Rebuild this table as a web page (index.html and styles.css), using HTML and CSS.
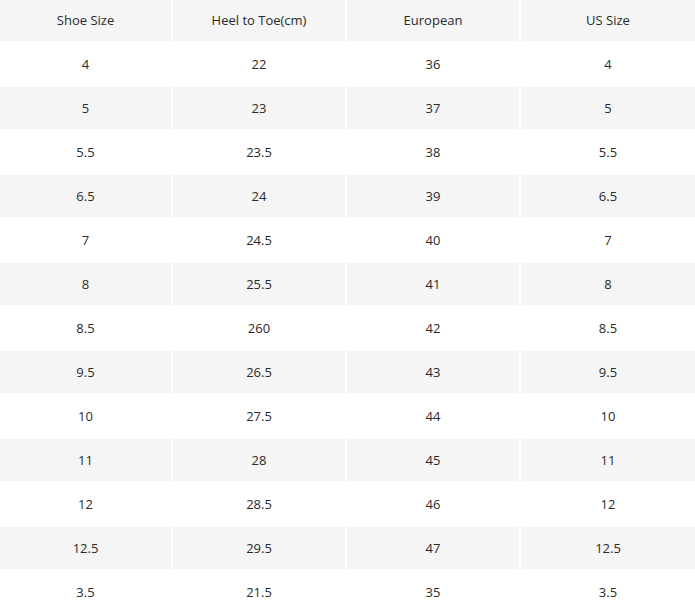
FILE: index.html
```html
<!DOCTYPE html>
<html>
<head>
<meta charset="utf-8">
<link rel="stylesheet" href="styles.css">
</head>
<body>
<div class="size-table">
  <div class="row head"><div>Shoe Size</div><div>Heel to Toe(cm)</div><div>European</div><div>US Size</div></div>
  <div class="row"><div>4</div><div>22</div><div>36</div><div>4</div></div>
  <div class="row alt"><div>5</div><div>23</div><div>37</div><div>5</div></div>
  <div class="row"><div>5.5</div><div>23.5</div><div>38</div><div>5.5</div></div>
  <div class="row alt"><div>6.5</div><div>24</div><div>39</div><div>6.5</div></div>
  <div class="row"><div>7</div><div>24.5</div><div>40</div><div>7</div></div>
  <div class="row alt"><div>8</div><div>25.5</div><div>41</div><div>8</div></div>
  <div class="row"><div>8.5</div><div>260</div><div>42</div><div>8.5</div></div>
  <div class="row alt"><div>9.5</div><div>26.5</div><div>43</div><div>9.5</div></div>
  <div class="row"><div>10</div><div>27.5</div><div>44</div><div>10</div></div>
  <div class="row alt"><div>11</div><div>28</div><div>45</div><div>11</div></div>
  <div class="row"><div>12</div><div>28.5</div><div>46</div><div>12</div></div>
  <div class="row alt"><div>12.5</div><div>29.5</div><div>47</div><div>12.5</div></div>
  <div class="row"><div>3.5</div><div>21.5</div><div>35</div><div>3.5</div></div>
</div>
</body>
</html>
```

FILE: styles.css
```css
html, body {
  margin: 0;
  padding: 0;
  background: #ffffff;
}
body {
  font-family: "Open Sans", "Noto Sans", sans-serif;
  font-size: 13px;
  color: #2a2a2a;
  overflow: hidden;
}
.size-table {
  display: flex;
  flex-direction: column;
  gap: 2px;
  margin-top: -1px;
  width: 695px;
}
.row {
  display: grid;
  grid-template-columns: 171px 172px 172px 1fr;
  column-gap: 2px;
  height: 42px;
}
.row > div {
  display: flex;
  align-items: center;
  justify-content: center;
}
.head > div,
.alt > div {
  background: #f5f5f5;
}
```
